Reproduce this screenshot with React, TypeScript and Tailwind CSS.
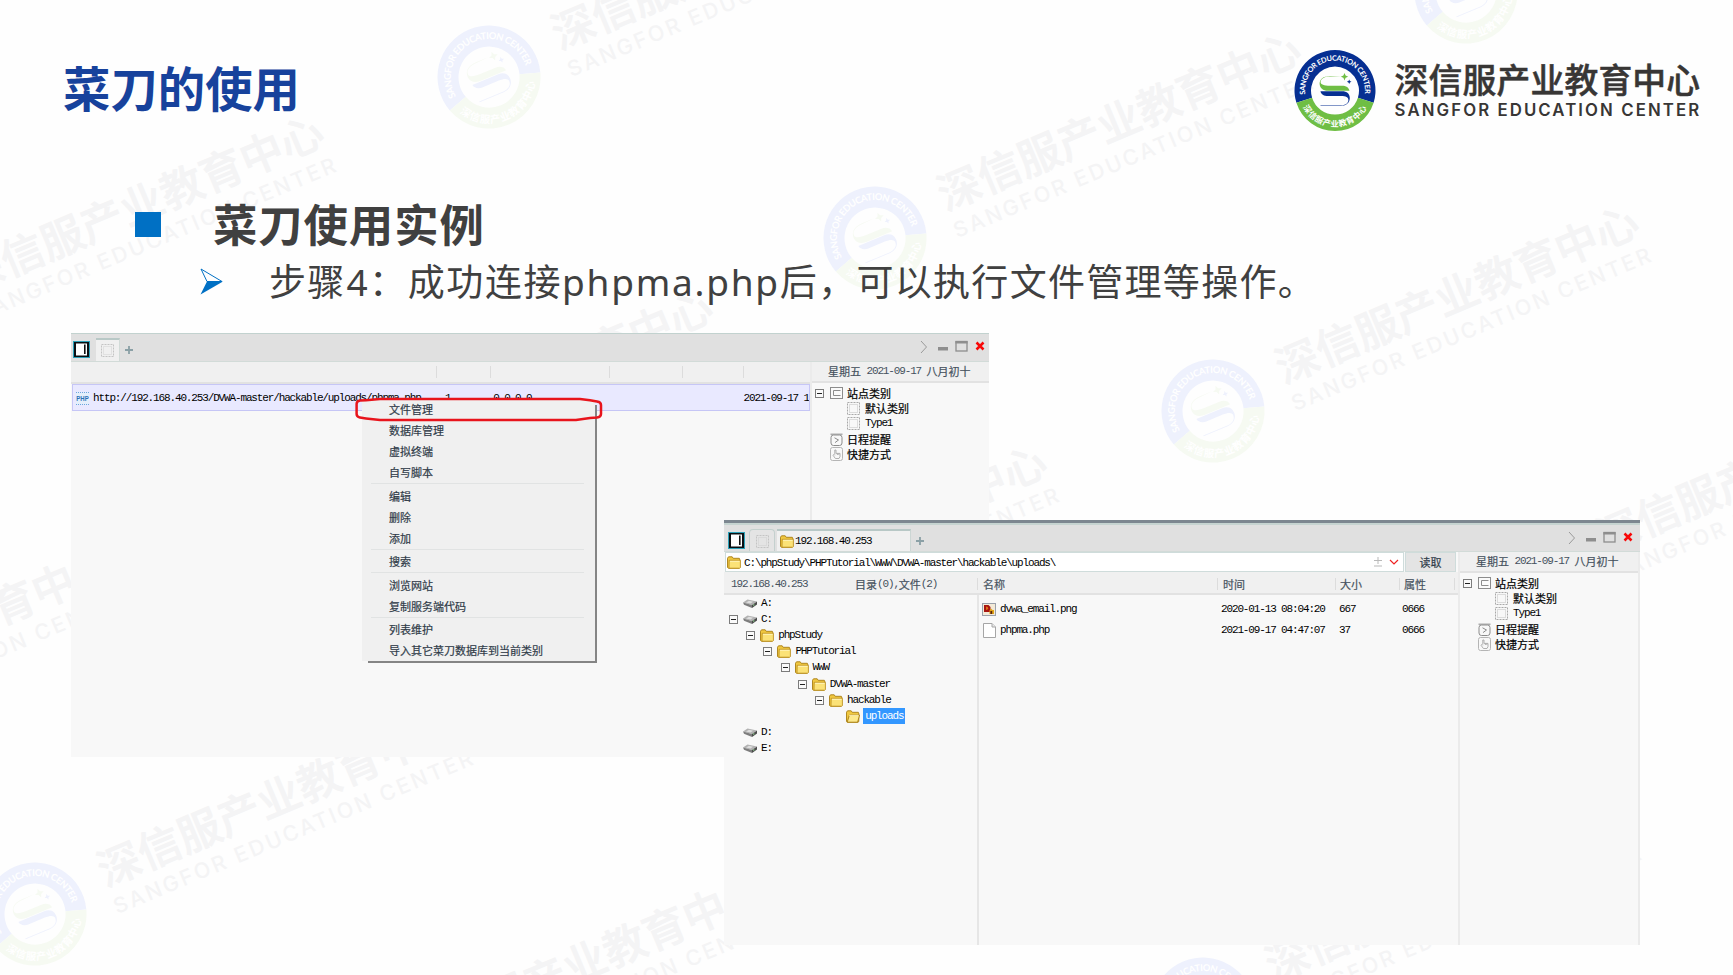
import React from 'react';

/* Splits a label into CJK and Latin runs so that each gets its own metrics. */
function Label({ text, className = '' }: { text: string; className?: string }) {
  const runs = text.match(/[\u2e80-\uffff]+|[^\u2e80-\uffff]+/g) ?? [];
  return (
    <span className={`inline-flex shrink-0 items-center whitespace-pre ${className}`}>
      {runs.map((run, i) =>
        /[\u2e80-\uffff]/.test(run) ? (
          <span key={i} className="font-['Noto_Sans_CJK_SC',sans-serif] text-[11px] leading-[15px] [-webkit-text-stroke:0.2px]">{run}</span>
        ) : (
          <span key={i} className="font-['Liberation_Mono',monospace] text-[11px] leading-[15px] tracking-[-1.14px]">{run}</span>
        ),
      )}
    </span>
  );
}

function BrandMark({ id, blue, green }: { id: string; blue: string; green: string }) {
  return (
    <g>
      <path d="M-38.6 12.3A40.5 40.5 0 1 1 38.6 12.3L22.9 7.3A24 24 0 1 0 -22.9 7.3Z" fill={blue} />
      <path d="M-38.6 12.3A40.5 40.5 0 0 0 38.6 12.3L22.9 7.3A24 24 0 0 1 -22.9 7.3Z" fill={green} />
      <path id={`${id}-top`} d="M-29.6 5A30 30 0 1 1 29.6 5" fill="none" />
      <path id={`${id}-bottom`} d="M-33 15A36.2 36.2 0 0 0 33 15" fill="none" />
      <text fill="#fff" fontSize="7.4" fontWeight="700" fontFamily="Lato, sans-serif">
        <textPath href={`#${id}-top`} startOffset="1" textLength="101">SANGFOR EDUCATION CENTER</textPath>
      </text>
      <text fill="#fff" fontSize="8.2" fontWeight="700" fontFamily="Noto Sans CJK SC, sans-serif">
        <textPath href={`#${id}-bottom`} startOffset="2" textLength="78">深信服产业教育中心</textPath>
      </text>
      <path d="M6.5 -14.6H-5C-12 -14.6 -15.4 -11 -15.4 -7C-15.4 -2.5 -12 .3 -7 .3H14.5C14 -3 11 -4.8 7 -4.8H-5C-11 -4.8 -14.4 -6 -14.4 -8.5C-14.4 -12 -10 -14 -5 -14Z" fill={green} />
      <path d="M-14.5 .8C-14 4 -11 5.6 -7 5.6H6C11 5.6 13.4 7 13.4 9.4C13.4 12.6 10 14.9 6 14.9H-14.5V15.5H6C11.5 15.5 14.8 12 14.8 7.6C14.8 3.4 12 .8 7 .8Z" fill={blue} />
      <path d="M9.5 -17.6L10.6 -14.9L13.2 -13.8L10.6 -12.7L9.5 -10L8.4 -12.7L5.8 -13.8L8.4 -14.9Z" fill={green} />
      <path d="M14.2 -11L14.9 -9.4L16.5 -8.7L14.9 -8L14.2 -6.4L13.5 -8L11.9 -8.7L13.5 -9.4Z" fill={blue} />
    </g>
  );
}

const solid = { blue: '#062f92', green: '#6fbe44', ink: '#383635', weight: 600 };
const faint = { blue: '#eef1fd', green: '#f6faf2', ink: '#f4f4f5', weight: 500 };

function BrandLockup({ id, tone }: { id: string; tone: typeof solid }) {
  return (
    <g>
      <BrandMark id={id} blue={tone.blue} green={tone.green} />
      <text x="59.6" y="2" fill={tone.ink} stroke={tone.ink} strokeWidth=".5" fontSize="33.8" fontWeight="500" fontFamily="Noto Sans CJK SC, sans-serif" textLength="305.5">
        深信服产业教育中心
      </text>
      <text x="59.6" y="25.3" fill={tone.ink} fontSize="16.8" fontWeight={tone.weight} fontFamily="Inter, sans-serif" textLength="304.5">
        SANGFOR EDUCATION CENTER
      </text>
    </g>
  );
}

const watermarks = [
  [489, 77], [875, 238], [1213, 411], [35, 914], [1466, -8], [1203, 1009],
  [-102, 321], [287, 496], [621, 651], [-310, 753], [341, 1079], [1534, 581],
];

function Watermarks() {
  return (
    <svg className="pointer-events-none absolute inset-0" width="1733" height="975" viewBox="0 0 1733 975" aria-hidden="true">
      {watermarks.map(([x, y], i) => (
        <g key={i} transform={`translate(${x} ${y}) rotate(-22.8) scale(1.272)`}>
          <BrandLockup id={`wm${i}`} tone={faint} />
        </g>
      ))}
    </svg>
  );
}

function SidebarToggle() {
  return (
    <svg width="17" height="17" viewBox="0 0 17 17" className="shrink-0">
      <rect width="17" height="17" fill="#2ba0b8" />
      <rect x="1" y="1" width="15" height="15" fill="#0a0f12" />
      <rect x="3" y="2.5" width="11" height="12" fill="#fff" />
      <rect x="11" y="3.5" width="1.6" height="9.5" fill="#111" />
    </svg>
  );
}

function DashedIcon({ pale = false }: { pale?: boolean }) {
  const c = pale ? '#c4c4c4' : '#a9a9a9';
  return (
    <svg width="13" height="13" viewBox="0 0 13 13" fill="none" className="shrink-0">
      <rect x=".5" y=".5" width="12" height="12" stroke={c} strokeDasharray="2 1" />
      <rect x="2.5" y="2.5" width="8" height="8" stroke={c} strokeDasharray="1 1" opacity=".7" />
    </svg>
  );
}

function Plus() {
  return (
    <svg width="8" height="8" viewBox="0 0 8 8" className="shrink-0">
      <path d="M4 0V8M0 4H8" stroke="#8ba0a6" strokeWidth="1.8" />
    </svg>
  );
}

function WindowControls() {
  return (
    <svg width="66" height="14" viewBox="0 0 66 14" fill="none" className="shrink-0">
      <path d="M1 1L6.5 7L1 13" stroke="#9a9a9a" />
      <rect x="18" y="7" width="10" height="3.5" fill="#8e8e8e" />
      <rect x="36" y="1.5" width="11" height="9.5" stroke="#8e8e8e" strokeWidth="1.3" />
      <path d="M35.4 2.3H47.6" stroke="#8e8e8e" strokeWidth="2.4" />
      <path d="M56.5 2.5L63.5 9.5M63.5 2.5L56.5 9.5" stroke="#f80808" strokeWidth="2.5" />
    </svg>
  );
}

function Minus({ className = '' }: { className?: string }) {
  return (
    <svg width="9" height="9" viewBox="0 0 9 9" fill="none" className={`shrink-0 ${className}`}>
      <rect x=".5" y=".5" width="8" height="8" fill="#fafafa" stroke="#7c7c7c" />
      <path d="M2 4.5H7" stroke="#222" />
    </svg>
  );
}

function Folder({ open = false }: { open?: boolean }) {
  return (
    <svg width="14" height="13" viewBox="0 0 14 13" className="shrink-0">
      <path d="M.5 2.2L1.5 .8H5.2L6.2 2.3H12.3L12.8 3V11.6L12 12.3H1.4L.5 11.4Z" fill="#f0c840" stroke="#a87e14" strokeWidth=".9" />
      {open ? (
        <path d="M3.4 5H13.6L11.6 12.2H1.2Z" fill="#fde98c" stroke="#a87e14" strokeWidth=".9" />
      ) : (
        <path d="M2.2 4.3H13.4V11.6L12.8 12.2H2Z" fill="#fbe277" stroke="#b98c1a" strokeWidth=".8" />
      )}
      <path d="M3 5.3H12.6" stroke="#fff6c4" strokeWidth=".9" />
    </svg>
  );
}

function Drive() {
  return (
    <svg width="14" height="9" viewBox="0 0 14 9" className="shrink-0">
      <path d="M0 3.6L4.5 .4L14 2.6L9 6Z" fill="#b2b2b2" />
      <path d="M0 3.6L9 6V9L1 5.8Z" fill="#7d7d7d" />
      <path d="M9 6L14 2.6V5.4L9 9Z" fill="#4b4b4b" />
      <path d="M3 3.4L6 1.8L10 2.8L7.5 4.6Z" fill="#dedede" />
      <rect x="10" y="5.4" width="1.4" height="1.2" fill="#8fd48f" />
    </svg>
  );
}

function SiteIcon() {
  return (
    <svg width="13" height="12" viewBox="0 0 13 12" fill="none" className="shrink-0">
      <rect x=".5" y=".5" width="12" height="11" fill="#fafafa" stroke="#8c8c8c" />
      <path d="M10.5 3.5H3.5V8.5H10.5" stroke="#8c8c8c" />
    </svg>
  );
}

function ClockIcon() {
  return (
    <svg width="13" height="13" viewBox="0 0 13 13" fill="none" className="shrink-0">
      <rect x="1" y="2" width="11" height="10.5" rx="2.5" stroke="#8c8c8c" />
      <path d="M.5 1.2H12.5" stroke="#9a9a9a" strokeWidth="1.2" />
      <path d="M4.5 4.8L8.5 7L5 9.6" stroke="#8c8c8c" />
    </svg>
  );
}

function HandIcon() {
  return (
    <svg width="13" height="14" viewBox="0 0 13 14" fill="none" className="shrink-0">
      <rect x=".5" y=".5" width="12" height="13" rx="2" stroke="#b5b5b5" />
      <path d="M4.8 7.5V3H6V6.4H10V9.6L9 11.5H5.4L3 8.2L3.8 7.4L4.8 8.4M7.4 6.4V8M8.8 6.4V8" stroke="#a8a8a8" strokeWidth=".9" />
    </svg>
  );
}

function Sidebar({ className }: { className: string }) {
  return (
    <aside className={`flex shrink-0 flex-col border-l-2 border-[#ebebeb] bg-[#f8f8f8] ${className}`}>
      <div className="flex h-[21px] shrink-0 items-center border-b-2 border-[#e2e2e2] bg-[#f0f0f0] pl-4 text-[#46525e]">
        <Label text="星期五 2021-09-17 八月初十" />
      </div>
      <div className="flex flex-col pt-[2.5px] text-black">
        <div className="flex h-[15.3px] items-center pl-[3px]">
          <Minus />
          <span className="ml-1.5 flex w-[17px]"><SiteIcon /></span>
          <Label text="站点类别" />
        </div>
        <div className="flex h-[15.3px] items-center pl-[35px]">
          <span className="flex w-[18px]"><DashedIcon /></span>
          <Label text="默认类别" />
        </div>
        <div className="flex h-[15.3px] items-center pl-[35px]">
          <span className="flex w-[18px]"><DashedIcon /></span>
          <Label text="Type1" />
        </div>
        <div className="flex h-[15.3px] items-center pl-[18px]">
          <span className="flex w-[17px]"><ClockIcon /></span>
          <Label text="日程提醒" />
        </div>
        <div className="flex h-[15.3px] items-center pl-[18px]">
          <span className="flex w-[17px]"><HandIcon /></span>
          <Label text="快捷方式" />
        </div>
      </div>
    </aside>
  );
}

const menuGroups = [
  ['文件管理', '数据库管理', '虚拟终端', '自写脚本'],
  ['编辑', '删除', '添加'],
  ['搜索'],
  ['浏览网站', '复制服务端代码'],
  ['列表维护', '导入其它菜刀数据库到当前类别'],
];

function ContextMenu() {
  return (
    <div className="absolute left-[291px] top-[66px] w-[233px]">
      <div className="absolute -bottom-0.5 -right-0.5 left-1.5 top-1.5 bg-[#858585] blur-[0.6px]" />
      <div className="relative bg-[#f0f0f0]">
        {menuGroups.map((group, g) => (
          <div key={g} className={g > 0 ? 'relative pt-[2.5px]' : ''}>
            {g > 0 && <div className="absolute left-[9px] right-[11px] top-0 h-px bg-[#e1e3e3]" />}
            {group.map((item) => (
              <div key={item} className="flex h-[21px] items-center pl-[27px] text-[#2f3b48]">
                <Label text={item} />
              </div>
            ))}
          </div>
        ))}
      </div>
      <svg className="absolute -left-2 -top-1" width="250" height="30" viewBox="0 0 250 30" fill="none">
        <path d="M26 4H226L236 5.2L243 6.4Q247 7 247 10V19Q247 22 243 22.6L236 23L222 25H26L12 23.4L6 22.6Q2.6 21.6 2.6 19V9Q2.6 6.2 6 5.6L12 5.2Z" stroke="#e8141c" strokeWidth="2.5" />
      </svg>
    </div>
  );
}

function Divider({ className }: { className: string }) {
  return <span className={`flex h-3 shrink-0 border-r border-[#dcdcdc] ${className}`} />;
}

function SiteListWindow() {
  return (
    <section className="absolute left-[71px] top-[333px] flex h-[424px] w-[918px] flex-col bg-[#f8f8f8]">
      <header className="flex h-[29px] shrink-0 items-end justify-between border-b border-t border-b-[#d2dbd8] border-t-[#c2d2cf] bg-[#e0e0e0]">
        <div className="flex h-[27px] items-end pl-0.5">
          <span className="mb-[3px]"><SidebarToggle /></span>
          <span className="ml-1.5 flex h-[23px] w-6 items-center justify-center border-r border-t-2 border-r-[#d2dbd8] border-t-[#b8c8c6] bg-[#f0f0f0]">
            <DashedIcon pale />
          </span>
          <span className="mb-[7px] ml-[5px]"><Plus /></span>
        </div>
        <div className="mb-[7px] mr-[3px] flex"><WindowControls /></div>
      </header>
      <div className="flex min-h-0 flex-1">
        <div className="flex w-[739px] shrink-0 flex-col overflow-hidden">
          <div className="flex h-[22px] shrink-0 items-center border-b-2 border-[#e2e2e2] bg-[#f0f0f0]">
            <Divider className="w-[366px]" />
            <Divider className="w-[54px]" />
            <Divider className="w-[119px]" />
            <Divider className="w-[73px]" />
            <Divider className="w-[61px]" />
          </div>
          <div className="ml-px flex h-[27px] shrink-0 items-center overflow-hidden border border-[#c6c6f6] bg-[#e9e9ff] pl-[3px] pt-0.5 text-black">
            <svg width="13" height="13" viewBox="0 0 13 13" className="shrink-0">
              <rect y=".5" width="13" height="12" fill="#e4effb" />
              <path d="M0 .5H13M0 12.5H13" stroke="#6ba6dc" strokeDasharray="1 1" />
              <text x=".3" y="9.4" fontSize="7.5" fontWeight="700" fontFamily="Liberation Sans, sans-serif" fill="#2d6fb8" textLength="12.4" lengthAdjust="spacingAndGlyphs">PHP</text>
            </svg>
            <span className="ml-1 flex w-[349px]"><Label text="http://192.168.40.253/DVWA-master/hackable/uploads/phpma.php" /></span>
            <span className="flex w-[54px]"><Label text="-1" /></span>
            <span className="flex w-[252px]"><Label text="0.0.0.0" /></span>
            <Label text="2021-09-17 1" />
          </div>
        </div>
        <Sidebar className="flex-1" />
      </div>
      <ContextMenu />
    </section>
  );
}

const tree: { name: string; level: number; kind: 'drive' | 'folder' | 'open'; expanded?: boolean }[] = [
  { name: 'A:', level: 0, kind: 'drive' },
  { name: 'C:', level: 0, kind: 'drive', expanded: true },
  { name: 'phpStudy', level: 1, kind: 'folder', expanded: true },
  { name: 'PHPTutorial', level: 2, kind: 'folder', expanded: true },
  { name: 'WWW', level: 3, kind: 'folder', expanded: true },
  { name: 'DVWA-master', level: 4, kind: 'folder', expanded: true },
  { name: 'hackable', level: 5, kind: 'folder', expanded: true },
  { name: 'uploads', level: 6, kind: 'open' },
  { name: 'D:', level: 0, kind: 'drive' },
  { name: 'E:', level: 0, kind: 'drive' },
];

function FileTree() {
  return (
    <div className="flex w-[253px] shrink-0 flex-col text-black">
      {tree.map((node) => (
        <div key={node.name} className="flex h-[16.2px] items-center" style={{ paddingLeft: 5 + node.level * 17.2 }}>
          <span className="flex w-3.5">{node.expanded && <Minus />}</span>
          <span className="flex w-[17px]">{node.kind === 'drive' ? <Drive /> : <Folder open={node.kind === 'open'} />}</span>
          {node.kind === 'open' ? (
            <span className="flex h-4 w-[42px] items-center bg-[#3397ff] px-0.5 text-white"><Label text={node.name} /></span>
          ) : (
            <span className="ml-px flex"><Label text={node.name} /></span>
          )}
        </div>
      ))}
    </div>
  );
}

function FileRow({ icon, name, time, size, attr }: { icon: React.ReactNode; name: string; time: string; size: string; attr: string }) {
  return (
    <div className="flex h-[21px] items-center pl-[3px] text-black">
      <span className="flex w-[18px]">{icon}</span>
      <span className="flex w-[221px]"><Label text={name} /></span>
      <span className="flex w-[118px]"><Label text={time} /></span>
      <span className="flex w-[63px]"><Label text={size} /></span>
      <Label text={attr} />
    </div>
  );
}

function ImageFileIcon() {
  return (
    <svg width="14" height="13" viewBox="0 0 14 13" className="shrink-0">
      <rect x=".5" y=".5" width="13" height="12" fill="#f3ead8" stroke="#9aa0aa" />
      <path d="M2 2H6.5L8.5 4V9H2Z" fill="#a81510" />
      <path d="M4 3.6Q6.4 3.8 6.2 5.6Q6 7 4 7Z" fill="#e07018" />
      <path d="M7.5 7.5L9 5.5L10.5 7H12V11H7.5Z" fill="#e0a416" />
      <rect x="8.4" y="8" width="1.8" height="3" fill="#5a2210" />
    </svg>
  );
}

function BlankFileIcon() {
  return (
    <svg width="13" height="15" viewBox="0 0 13 15" className="ml-px shrink-0">
      <path d="M.5 .5H9L12.5 4V14.5H.5Z" fill="#fff" stroke="#a6a6a6" />
      <path d="M9 .5V4H12.5" fill="#e8e8e8" stroke="#a6a6a6" />
    </svg>
  );
}

function FileManagerWindow() {
  return (
    <section className="absolute left-[724px] top-[520px] flex h-[425px] w-[916px] flex-col border-t-[3px] border-[#7d8790] bg-[#f8f8f8]">
      <header className="flex h-[29px] shrink-0 items-end justify-between border-b border-t-2 border-b-[#d2dbd8] border-t-[#c6d4d1] bg-[#e0e0e0]">
        <div className="flex h-[26px] items-end pl-1">
          <span className="mb-0.5"><SidebarToggle /></span>
          <span className="ml-1 flex h-[22px] w-[26px] items-center justify-center rounded-t-sm border-x border-t border-[#c4d0ce] bg-[#e4e4e4] pt-0.5">
            <DashedIcon pale />
          </span>
          <span className="ml-0.5 flex h-[22px] w-[134px] items-center border-r border-t-2 border-r-[#ccd6d4] border-t-[#b8c8c6] bg-[#f0f0f0] pl-[3px] text-black">
            <Folder />
            <Label text="192.168.40.253" className="ml-px pt-px" />
          </span>
          <span className="mb-1.5 ml-[5px]"><Plus /></span>
        </div>
        <div className="mb-1.5 mr-1.5 flex"><WindowControls /></div>
      </header>
      <div className="flex min-h-0 flex-1">
        <div className="flex w-[734px] shrink-0 flex-col">
          <div className="flex h-5 shrink-0 items-stretch pl-px">
            <div className="flex w-[679px] items-center border border-[#cfdcdb] bg-white pl-px pr-1 text-black">
              <Folder />
              <Label text="C:\phpStudy\PHPTutorial\WWW\DVWA-master\hackable\uploads\" className="ml-[3px] pt-0.5" />
              <svg className="ml-auto" width="26" height="10" viewBox="0 0 26 10" fill="none">
                <path d="M5 0V7M1 3.5H9M1 9H9" stroke="#b9b9b9" />
                <path d="M17 3L21 7L25 3" stroke="#ee2222" strokeWidth="1.2" />
              </svg>
            </div>
            <div className="ml-px flex w-[51px] items-center justify-center border border-[#cfdcdb] bg-[#e4e4e4] pt-px text-[#2f3b48]">
              <Label text="读取" />
            </div>
          </div>
          <div className="flex h-[23px] shrink-0 items-center border-b-2 border-[#e2e2e2] bg-[#f0f0f0] pl-[7px] pt-[3px] text-[#46525e]">
            <span className="flex w-[124px]"><Label text="192.168.40.253" /></span>
            <span className="flex w-[122px]"><Label text="目录(0),文件(2)" /></span>
            <Divider className="w-0" />
            <span className="ml-[5px] flex w-[234px]"><Label text="名称" /></span>
            <Divider className="w-0" />
            <span className="ml-[5px] flex w-[112px]"><Label text="时间" /></span>
            <Divider className="w-0" />
            <span className="ml-1 flex w-[59px]"><Label text="大小" /></span>
            <Divider className="w-0" />
            <span className="ml-1 flex w-[50px]"><Label text="属性" /></span>
            <Divider className="w-0" />
          </div>
          <div className="flex min-h-0 flex-1">
            <FileTree />
            <div className="flex flex-1 flex-col border-l-2 border-[#e6e6e6] pt-1">
              <FileRow icon={<ImageFileIcon />} name="dvwa_email.png" time="2020-01-13 08:04:20" size="667" attr="0666" />
              <FileRow icon={<BlankFileIcon />} name="phpma.php" time="2021-09-17 04:47:07" size="37" attr="0666" />
            </div>
          </div>
        </div>
        <Sidebar className="flex-1 border-r-2" />
      </div>
    </section>
  );
}

export default function App() {
  return (
    <main className="relative h-[975px] w-[1733px] overflow-hidden bg-[#fefefe] font-['Noto_Sans','Noto_Sans_CJK_SC',sans-serif]">
      <Watermarks />
      <div className="relative">
        <header className="flex h-[180px] items-start justify-between pl-[63px]">
          <h1 className="mt-[52px] whitespace-nowrap font-['Noto_Sans_CJK_SC',sans-serif] text-[47.4px] font-bold leading-[70px] text-[#17429c]">菜刀的使用</h1>
          <svg className="mr-[29px] mt-[49px]" width="410" height="84" viewBox="-41 -41.5 410 84">
            <BrandLockup id="brand" tone={solid} />
          </svg>
        </header>
        <div className="flex h-[90px] items-start pl-[135px]">
          <span className="mt-8 h-[25px] w-[26px] bg-[#0070c4]" />
          <h2 className="ml-[52px] mt-[13px] whitespace-nowrap font-['Noto_Sans_CJK_SC',sans-serif] text-[44.4px] font-bold leading-[60px] tracking-[0.9px] text-[#404040]">菜刀使用实例</h2>
        </div>
        <div className="-mt-[17px] flex h-[56px] items-center pl-[200px]">
          <svg width="24" height="27" viewBox="0 0 24 27" fill="none">
            <path d="M1 1L22 13.5H7Z" stroke="#0070c4" strokeWidth="1" />
            <path d="M7 13.5H23L.5 26.5Z" fill="#0070c4" />
          </svg>
          <p className="-mt-px ml-[45px] flex items-baseline whitespace-nowrap font-['Noto_Sans_CJK_SC',sans-serif] text-[37px] leading-[50px] tracking-[1.3px] text-[#404040]">
            <span>步骤</span>
            <span className="ml-px font-['Noto_Sans',sans-serif]">4</span>
            <span className="tracking-[1.6px]">：成功连接</span>
            <span className="font-['Noto_Sans',sans-serif] tracking-[1.75px]">phpma.php</span>
            <span>后，可以执行文件管理等操作。</span>
          </p>
        </div>
      </div>
      <SiteListWindow />
      <FileManagerWindow />
    </main>
  );
}
